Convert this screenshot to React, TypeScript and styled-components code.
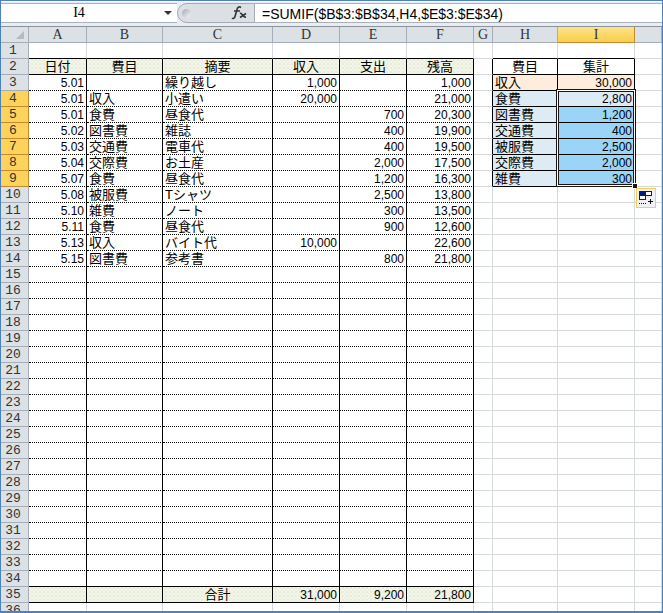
import React from "react";
import styled, { createGlobalStyle } from "styled-components";

const Global = createGlobalStyle`
  *, *::before, *::after { box-sizing: border-box; }
  body { margin: 0; background: #fff; color: #000; }
`;

const sans = `"Liberation Sans", "Noto Sans CJK JP", sans-serif`;

const Window = styled.main`
  height: 100vh;
  padding: 1px 0;
  border: 1px solid #4a82c0;
  border-bottom-width: 2px;
  display: flex;
  flex-direction: column;
  overflow: hidden;
  font-family: ${sans};
`;

const FormulaBar = styled.header`
  display: flex;
  flex: none;
  height: 25px;
  padding-top: 1px;
  background: #e9ecf1;
  border-bottom: 1px solid #8b929c;
`;

const NameField = styled.div`
  display: flex;
  align-items: center;
  width: 176px;
  height: 20px;
  background: #fff;
  border-top: 1px solid #a9b1bb;
  border-bottom: 1px solid #a9b1bb;
`;

const NameInput = styled.input`
  flex: 1;
  min-width: 0;
  border: 0;
  padding: 0;
  background: none;
  text-align: center;
  font: 14px "Liberation Serif", serif;
  color: #000;
  outline: none;
`;

const IconButton = styled.button`
  display: flex;
  align-items: center;
  justify-content: center;
  border: 0;
  padding: 0;
  background: none;
`;

const Functions = styled.div`
  display: flex;
  align-items: center;
  justify-content: space-between;
  width: 78px;
  height: 20px;
  padding: 0 4px;
  border: 1px solid #a3abb5;
  border-radius: 10px 0 0 10px;
  background: #dce0e5;
`;

const Knob = styled.span`
  width: 9px;
  height: 9px;
  border-radius: 50%;
  background: linear-gradient(135deg, #a3abb5, #f7f8fa);
`;

const FormulaInput = styled.input`
  flex: 1;
  min-width: 0;
  height: 20px;
  border: 0;
  border-top: 1px solid #a9b1bb;
  border-bottom: 1px solid #a9b1bb;
  padding: 1px 7px 0;
  font: 14px ${sans};
  color: #000;
  outline: none;
`;

const Grid = styled.table`
  width: 100%;
  table-layout: fixed;
  border-collapse: separate;
  border-spacing: 0;
`;

const Col = styled.col<{ $w?: number }>`
  width: ${(p) => (p.$w ? `${p.$w}px` : "auto")};
`;

const Head = styled.th<{ $on?: boolean }>`
  height: 16px;
  padding: 0;
  color: #333;
  border-right: 1px solid ${(p) => (p.$on ? "#c58a2c" : "#a5adb8")};
  border-bottom: 1px solid ${(p) => (p.$on ? "#c58a2c" : "#a5adb8")};
`;

const ColHead = styled(Head)`
  font: 14px/15px "Liberation Serif", serif;
  background: ${(p) => (p.$on ? "linear-gradient(#fce38a, #fdcd4a)" : "#dce1e6")};
`;

const RowHead = styled(Head)`
  padding: 1px 3px 0 0;
  font: 13px/14px "Liberation Mono", monospace;
  background: ${(p) => (p.$on ? "#fdd35c" : "#dce1e6")};
`;

const Corner = styled.td`
  height: 16px;
  padding: 0 4px 0 0;
  line-height: 0;
  text-align: right;
  background: #dce1e6;
  border-right: 1px solid #a5adb8;
  border-bottom: 1px solid #a5adb8;
`;

type Fill = "none" | "green" | "peach" | "blue" | "picked";
const fills: Record<Fill, string> = {
  none: "#fff",
  green: "conic-gradient(#e4ecdc 25%, #f4f7e8 0 50%, #edf1de 0 75%, #f4f5ec 0) 0 0 / 4px 4px",
  peach: "#feecdd",
  blue: "#ddebf5",
  picked: "#9ad4f6",
};

const Cell = styled.td<{ $r: string; $b: string; $fill: Fill; $align: string }>`
  position: relative;
  height: 16px;
  padding: 0 2px;
  line-height: 0;
  white-space: nowrap;
  text-align: ${(p) => p.$align};
  background: ${(p) => fills[p.$fill]};
  border-right: ${(p) => p.$r};
  border-bottom: ${(p) => p.$b};
`;

const Label = styled.span`
  display: block;
  height: 15px;
  font: 13px/15px ${sans};
`;

const Amount = styled.span`
  display: block;
  height: 15px;
  padding-top: 1px;
  font: 12px/15px ${sans};
`;

const Selection = styled.div`
  position: absolute;
  z-index: 1;
  top: -2px;
  left: -2px;
  right: -2px;
  height: 98px;
  border: 1px solid #1a1414;
  outline: 1px solid #fff;
  outline-offset: -2px;
  pointer-events: none;
  &::before {
    content: "";
    position: absolute;
    inset: 1px;
    border: 1px solid #1a1414;
  }
  &::after {
    content: "";
    position: absolute;
    right: -3px;
    bottom: -3px;
    width: 6px;
    height: 6px;
    border: 1px solid #fff;
    background: #1a1414;
  }
`;

const FillOptions = styled(IconButton)`
  position: absolute;
  z-index: 2;
  left: 1px;
  top: 1px;
  width: 20px;
  height: 20px;
  border: 1px solid #f6cf55;
  background: #f0f1f5;
`;

const grey = "1px solid #d5d9dc";
const black = "1px solid #000";
const dots = "1px dotted #000";

const letters = ["A", "B", "C", "D", "E", "F", "G", "H", "I", ""];
const widths = [58, 76, 110, 67, 67, 67, 19, 65, 77];

const ledger: Record<number, string[]> = {
  2: ["日付", "費目", "摘要", "収入", "支出", "残高"],
  3: ["5.01", "", "繰り越し", "1,000", "", "1,000"],
  4: ["5.01", "収入", "小遣い", "20,000", "", "21,000"],
  5: ["5.01", "食費", "昼食代", "", "700", "20,300"],
  6: ["5.02", "図書費", "雑誌", "", "400", "19,900"],
  7: ["5.03", "交通費", "電車代", "", "400", "19,500"],
  8: ["5.04", "交際費", "お土産", "", "2,000", "17,500"],
  9: ["5.07", "食費", "昼食代", "", "1,200", "16,300"],
  10: ["5.08", "被服費", "Tシャツ", "", "2,500", "13,800"],
  11: ["5.10", "雑費", "ノート", "", "300", "13,500"],
  12: ["5.11", "食費", "昼食代", "", "900", "12,600"],
  13: ["5.13", "収入", "バイト代", "10,000", "", "22,600"],
  14: ["5.15", "図書費", "参考書", "", "800", "21,800"],
  35: ["", "", "合計", "31,000", "9,200", "21,800"],
};

const summary: Record<number, string[]> = {
  2: ["費目", "集計"],
  3: ["収入", "30,000"],
  4: ["食費", "2,800"],
  5: ["図書費", "1,200"],
  6: ["交通費", "400"],
  7: ["被服費", "2,500"],
  8: ["交際費", "2,000"],
  9: ["雑費", "300"],
};

function look(row: number, col: number) {
  let r = grey;
  let b = grey;
  let fill: Fill = "none";
  let align = "left";
  if (col <= 5) {
    if (row >= 2 && row <= 35) r = black;
    if (row === 1 || row === 2 || row === 34 || row === 35) b = black;
    else if (row < 34) b = dots;
    if (row === 2 || row === 35) fill = "green";
    if (row === 2 || (row === 35 && col === 2)) align = "center";
    else if (col === 0 || col >= 3) align = "right";
  }
  if (col === 6 && row >= 2 && row <= 9) r = black;
  if (col === 7 || col === 8) {
    if (row <= 9) b = black;
    if (row >= 2 && row <= 9) r = black;
    if (row === 3) fill = "peach";
    if (row >= 4 && row <= 9) fill = col === 8 && row > 4 ? "picked" : "blue";
    if (row === 2) align = "center";
    else if (col === 8) align = "right";
  }
  return { $r: r, $b: b, $fill: fill, $align: align };
}

function textAt(row: number, col: number) {
  if (col <= 5) return ledger[row]?.[col] ?? "";
  if (col === 7 || col === 8) return summary[row]?.[col - 7] ?? "";
  return "";
}

const rows = Array.from({ length: 36 }, (_, i) => i + 1);

function FunctionIcon() {
  return (
    <svg width="22" height="16" viewBox="0 0 22 16" fill="none" stroke="#333" aria-hidden="true">
      <path d="M13 2.500C11 1 9.500 2.500 9 4.500L7 11.500C6.500 13.500 5 14 4 13M6 6H12" strokeWidth="1.600" />
      <path d="M12 8.500C14.500 7 14.500 13 18 12M18 8.500L12 12.500" strokeWidth="1.600" />
    </svg>
  );
}

export default function App() {
  return (
    <>
      <Global />
      <Window>
        <FormulaBar>
          <NameField>
            <NameInput aria-label="Name box" defaultValue="I4" />
            <IconButton aria-label="Open name list">
              <svg width="20" height="12" viewBox="0 0 20 12" aria-hidden="true">
                <path d="M7 4H15L11 8Z" fill="#333" />
              </svg>
            </IconButton>
          </NameField>
          <Functions>
            <Knob />
            <IconButton aria-label="Insert function">
              <FunctionIcon />
            </IconButton>
          </Functions>
          <FormulaInput aria-label="Formula" defaultValue="=SUMIF($B$3:$B$34,H4,$E$3:$E$34)" />
        </FormulaBar>
        <Grid>
          <colgroup>
            <Col $w={28} />
            {widths.map((w, i) => (
              <Col key={i} $w={w} />
            ))}
            <Col />
          </colgroup>
          <thead>
            <tr>
              <Corner>
                <svg width="8" height="8" viewBox="0 0 8 8" aria-hidden="true">
                  <path d="M8 0V8H0Z" fill="#b4bac2" />
                </svg>
              </Corner>
              {letters.map((l, i) => (
                <ColHead key={i} scope="col" $on={l === "I"}>
                  {l}
                </ColHead>
              ))}
            </tr>
          </thead>
          <tbody>
            {rows.map((row) => (
              <tr key={row}>
                <RowHead scope="row" $on={row >= 4 && row <= 9}>
                  {row}
                </RowHead>
                {letters.map((_, col) => {
                  const text = textAt(row, col);
                  const numeric = /^[\d.,]+$/.test(text);
                  return (
                    <Cell key={col} {...look(row, col)}>
                      {numeric ? <Amount>{text}</Amount> : text && <Label>{text}</Label>}
                      {row === 4 && col === 8 && <Selection />}
                      {row === 10 && col === 9 && (
                        <FillOptions aria-label="Auto fill options">
                          <svg width="16" height="16" viewBox="0 0 16 16" aria-hidden="true">
                            <path d="M1 1H14V6H8V10H1Z" fill="#001a8c" />
                            <path d="M8 2H13V5H8ZM2 6H7V9H2Z" fill="#fff" />
                            <path d="M1 13.500H9" stroke="#111" strokeDasharray="1 1" />
                            <path d="M12.500 9V14M10 11.500H15" stroke="#111" />
                          </svg>
                        </FillOptions>
                      )}
                    </Cell>
                  );
                })}
              </tr>
            ))}
          </tbody>
        </Grid>
      </Window>
    </>
  );
}
